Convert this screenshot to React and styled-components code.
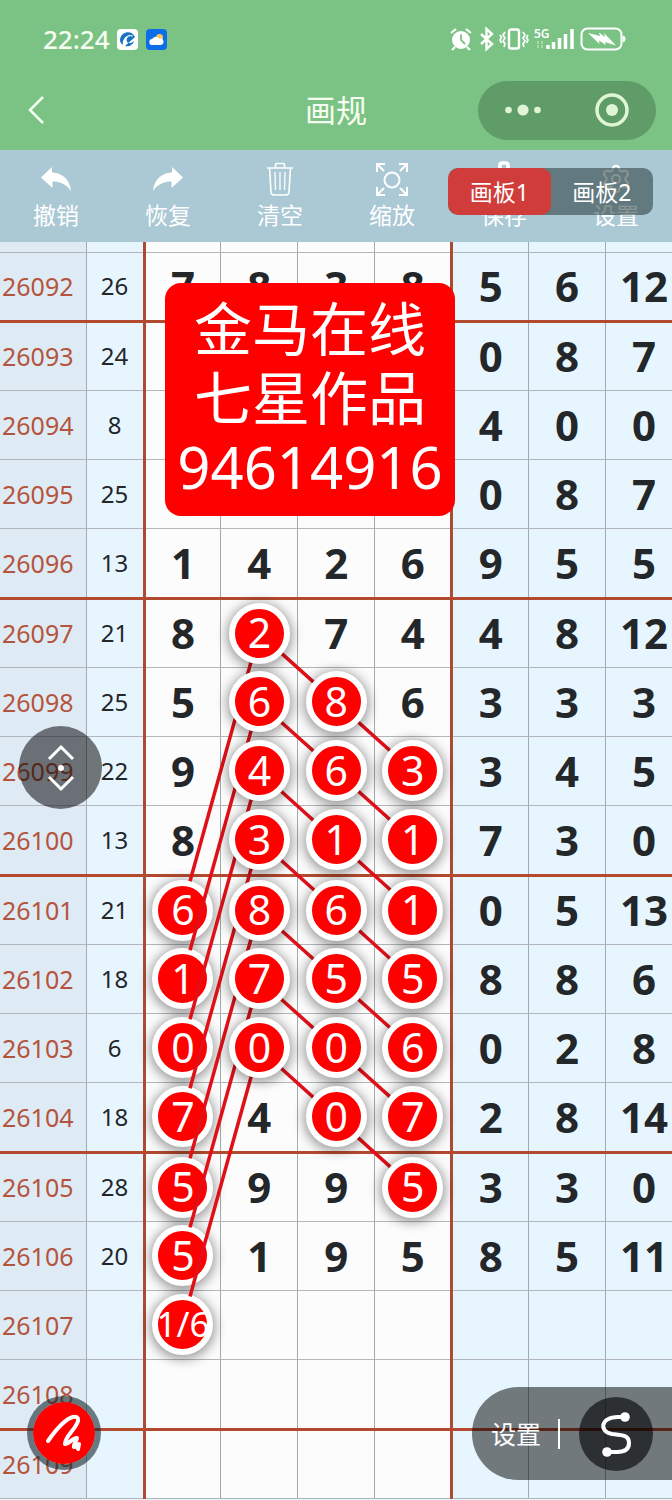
import React from 'react';
import styled, { createGlobalStyle } from 'styled-components';
import { Settings } from 'lucide-react';

const GlobalStyle = createGlobalStyle`
  * {
    box-sizing: border-box;
  }

  body {
    margin: 0;
    background: #e7f6fe;
    font-family: "Noto Sans", "Noto Sans CJK SC", sans-serif;
    overflow-x: hidden;
  }

  button {
    margin: 0;
    padding: 0;
    border: 0;
    background: none;
    color: inherit;
    font: inherit;
    cursor: pointer;
  }
`;

const Page = styled.main`
  position: relative;
  height: 100vh;
  overflow: hidden;
`;

const Header = styled.header`
  background: #7bc384;
  color: #f6fdf0;
`;

const StatusBar = styled.div`
  display: flex;
  align-items: center;
  justify-content: space-between;
  height: 70px;
  padding: 8px 46px 0 43px;

  svg {
    overflow: visible;
  }
`;

const StatusGroup = styled.div`
  display: flex;
  align-items: center;
  gap: ${props => props.$gap}px;
`;

const Clock = styled.time`
  font-size: 26px;
  line-height: 30px;
  font-weight: 500;
`;

const NetworkLabel = styled.span`
  align-self: flex-start;
  width: 16px;
  font-size: 12px;
  line-height: 14px;
  font-weight: 600;
  color: #fff;
`;

const NetworkColumn = styled.div`
  display: flex;
  flex-direction: column;
  width: 16px;
  height: 24px;
  margin: 0 -4px 0 4px;
`;

const NavBar = styled.nav`
  display: grid;
  grid-template-columns: 1fr auto 1fr;
  align-items: center;
  height: 80px;
  padding: 0 16px;
`;

const BackButton = styled.button`
  display: flex;
  justify-self: start;
  padding: 10px;
`;

const Title = styled.h1`
  margin: 0;
  font-size: 31px;
  line-height: 40px;
  font-weight: 400;
`;

const Capsule = styled.div`
  display: grid;
  grid-template-columns: 1fr 1fr;
  justify-self: end;
  width: 178px;
  height: 59px;
  border-radius: 30px;
  background: #5f9c67;
`;

const CapsuleButton = styled.button`
  display: flex;
  align-items: center;
  justify-content: center;
`;

const Toolbar = styled.div`
  position: relative;
  display: grid;
  grid-template-columns: repeat(6, 1fr);
  height: 92px;
  background: #abc8d5;
  color: #fff;
`;

const ToolButton = styled.button`
  display: flex;
  flex-direction: column;
  align-items: center;
  padding-top: 13px;
  font-size: 23px;
  line-height: 32px;

  svg {
    overflow: visible;
    margin-bottom: 4px;
  }
`;

const BoardSwitch = styled.div`
  position: absolute;
  top: 18px;
  right: 19px;
  display: grid;
  grid-template-columns: 1fr 1fr;
  width: 205px;
  height: 47px;
  border-radius: 10px;
  overflow: hidden;
  background: rgba(38, 58, 56, 0.55);
`;

const BoardButton = styled.button`
  border-radius: 10px;
  background: ${props => (props.$active ? '#cf3c3a' : 'transparent')};
  font-size: 23px;
  line-height: 44px;
`;

const Board = styled.section`
  position: relative;
  width: calc(100% + 11px);
`;

const Table = styled.table`
  width: 100%;
  table-layout: fixed;
  border-collapse: collapse;
`;

const Row = styled.tr`
  height: ${props => props.$height}px;

  td, th {
    border-bottom: ${props => (props.$thick ? '3px solid #b34a2f' : '1px solid #b0b6ba')};
  }
`;

const tones = {
  issue: '#deebf4',
  side: '#e7f6fe',
  main: '#fcfcfc',
};

const Cell = styled.td`
  padding: 0;
  border-right: ${props => (props.$edge ? '3px solid #ae4a34' : '1px solid #a4a9ad')};
  background: ${props => tones[props.$tone]};
  color: #24272a;
  font-size: ${props => (props.$small ? 24 : 42)}px;
  font-weight: ${props => (props.$small ? 400 : 700)};
  line-height: 48px;
  text-align: center;
`;

const IssueCell = styled.th`
  padding: 0 0 0 2px;
  border-right: 1px solid #a4a9ad;
  background: ${tones.issue};
  color: #b5543e;
  font-size: 25px;
  font-weight: 400;
  line-height: 48px;
  text-align: left;
`;

const Mark = styled.span`
  position: relative;
  z-index: ${props => (props.$under ? 1 : 3)};
  display: flex;
  align-items: center;
  justify-content: center;
  width: 61px;
  height: 61px;
  margin: 0 auto;
  padding-bottom: 2px;
  border: 6px solid #fff;
  border-radius: 50%;
  background: #fe0000;
  box-shadow: 0 2px 12px 2px rgba(0, 0, 0, 0.4);
  color: #fff;
  font-size: ${props => (props.$long ? 35 : 41)}px;
  font-weight: 400;
`;

const Strokes = styled.svg`
  position: absolute;
  z-index: 2;
  top: 0;
  left: 0;
  width: 100%;
  height: 100%;
  pointer-events: none;
`;

const Note = styled.div`
  position: absolute;
  z-index: 4;
  top: 41px;
  left: 165px;
  width: 290px;
  padding: 11px 0 15px;
  border-radius: 16px;
  background: #fe0000;
  color: #fff;
  font-size: 58px;
  line-height: 69px;
  text-align: center;
  white-space: nowrap;
`;

const ScrollHandle = styled.button`
  position: absolute;
  z-index: 5;
  top: 726px;
  left: 19px;
  width: 83px;
  height: 83px;
  border-radius: 50%;
  background: rgba(0, 0, 0, 0.52);
`;

const PenButton = styled.button`
  position: absolute;
  z-index: 5;
  left: 27px;
  bottom: 30px;
  width: 74px;
  height: 74px;
  border: 6px solid rgba(20, 40, 45, 0.6);
  border-radius: 50%;
  background: #fe0000;
  background-clip: padding-box;

  svg {
    display: block;
    margin: -6px;
  }
`;

const LinePanel = styled.div`
  position: absolute;
  z-index: 5;
  right: 0;
  bottom: 20px;
  display: flex;
  align-items: center;
  width: 200px;
  height: 93px;
  padding-left: 19px;
  border-radius: 47px 0 0 47px;
  background: rgba(0, 0, 0, 0.51);
  color: #fff;
`;

const PanelButton = styled.button`
  font-size: 25px;
  line-height: 32px;
`;

const Divider = styled.span`
  width: 2px;
  height: 30px;
  margin: 0 19px 0 17px;
  background: #fff;
`;

const LineButton = styled.button`
  width: 74px;
  height: 74px;
  flex: none;
  border-radius: 50%;
  background: rgba(0, 0, 0, 0.6);

  svg {
    display: block;
  }
`;

// values in [ ] are marked with a circle on the board
const rows = [
  ['26092', '26', '7', '8', '3', '8', '5', '6', '12'],
  ['26093', '24', '', '', '', '', '0', '8', '7'],
  ['26094', '8', '', '', '', '', '4', '0', '0'],
  ['26095', '25', '', '', '', '', '0', '8', '7'],
  ['26096', '13', '1', '4', '2', '6', '9', '5', '5'],
  ['26097', '21', '8', ['2'], '7', '4', '4', '8', '12'],
  ['26098', '25', '5', ['6'], ['8'], '6', '3', '3', '3'],
  ['26099', '22', '9', ['4'], ['6'], ['3'], '3', '4', '5'],
  ['26100', '13', '8', ['3'], ['1'], ['1'], '7', '3', '0'],
  ['26101', '21', ['6'], ['8'], ['6'], ['1'], '0', '5', '13'],
  ['26102', '18', ['1'], ['7'], ['5'], ['5'], '8', '8', '6'],
  ['26103', '6', ['0'], ['0'], ['0'], ['6'], '0', '2', '8'],
  ['26104', '18', ['7'], '4', ['0'], ['7'], '2', '8', '14'],
  ['26105', '28', ['5'], '9', '9', ['5'], '3', '3', '0'],
  ['26106', '20', ['5'], '1', '9', '5', '8', '5', '11'],
  ['26107', '', ['1/6'], '', '', '', '', '', ''],
  ['26108', '', '', '', '', '', '', '', ''],
  ['26109', '', '', '', '', '', '', '', ''],
];

const BOARD_WIDTH = 683;
const BOARD_HEIGHT = 1256;
const columnX = [182, 259, 336, 413];
const rowY = i => 45 + 69 * i + Math.floor(Math.max(i - 1, 0) / 4);

const isThick = i => i % 4 === 0;
const toneOf = column => (column > 1 && column < 6 ? 'main' : 'side');
const isEdge = column => column === 1 || column === 5;

const UndoIcon = ({ flip }) => (
  <svg width="32" height="32" viewBox="0 0 32 32" fill="currentColor">
    <path
      d="M1 14.500L12 4v5.500C23 10 30 17 31 28C26 21 20 18.500 12.500 18.500V25z"
      transform={flip ? 'matrix(-1 0 0 1 32 0)' : undefined}
    />
  </svg>
);

const TrashIcon = () => (
  <svg width="32" height="32" viewBox="0 0 32 32" fill="none" stroke="currentColor" strokeWidth="1.6">
    <path d="M3 5h26M11.500 5V1.500q0-1 1-1h7q1 0 1 1V5M5.500 5L7 29q0 3 3 3h12q3 0 3-3L26.500 5" />
    <path d="M11 9l.5 18M16 9v18M21 9l-.5 18" strokeWidth="1.300" />
  </svg>
);

const ZoomIcon = () => (
  <svg width="32" height="32" viewBox="0 0 32 32" fill="none" stroke="currentColor" strokeWidth="2">
    <circle cx="16" cy="17" r="7.500" />
    <path d="M1 9V1h8M1 1l7 7M23 1h8v8M31 1l-7 7M31 24v8h-8M31 32l-7-7M9 32H1v-8M1 32l7-7" />
  </svg>
);

const SaveIcon = () => (
  <svg width="32" height="32" viewBox="0 0 32 32" fill="none" stroke="currentColor" strokeWidth="3.500">
    <path d="M12 9V2q0-2 2-2h4q2 0 2 2v7M5 9h22v20H5zM11 19h10" />
  </svg>
);

const GearIcon = () => <Settings size={32} strokeWidth={1.5} />;

const tools = [
  { label: '撤销', icon: <UndoIcon /> },
  { label: '恢复', icon: <UndoIcon flip /> },
  { label: '清空', icon: <TrashIcon /> },
  { label: '缩放', icon: <ZoomIcon /> },
  { label: '保存', icon: <SaveIcon /> },
  { label: '设置', icon: <GearIcon /> },
];

const AppBadges = () => (
  <StatusGroup $gap={8}>
    <svg width="21" height="21" viewBox="0 0 21 21">
      <rect width="21" height="21" rx="4" fill="#fff" />
      <path d="M18 8C16 3 10 2 6 5C2 8 2 14 6 16C5 11 8 7 13 7C10 8 9 10 10 13C12 15 15 14 17 12C16 16 12 18 8 17" fill="#1673c4" />
      <path d="M8 9q3-4 8-2" fill="none" stroke="#fff" />
    </svg>
    <svg width="21" height="21" viewBox="0 0 21 21">
      <rect width="21" height="21" rx="4" fill="#0b6ee8" />
      <circle cx="13.500" cy="8.500" r="3.500" fill="#ffc35a" />
      <path d="M6.500 16a3 3 0 0 1-.3-6a4 4 0 0 1 7-.5a3.300 3.300 0 0 1 1.800 6.500z" fill="#fff" />
    </svg>
  </StatusGroup>
);

const StatusIcons = () => (
  <StatusGroup $gap={0}>
    <svg width="80" height="24" viewBox="0 0 80 24" fill="none" stroke="#fff">
      <circle cx="11" cy="13" r="9" fill="#fff" stroke="none" />
      <path d="M1 6l5-4M21 6l-5-4M5 20l-3 3M17 20l3 3" strokeWidth="2.200" />
      <path d="M11 7.500V13l4 4" stroke="#7bc384" strokeWidth="1.800" />
      <path d="M31 7l11 10l-5.500 5V2L42 7L31 17" strokeWidth="2.400" />
      <rect x="59" y="2.500" width="10" height="19" rx="2" strokeWidth="2.400" />
      <path d="M55 5l-2 3l2 3l-2 3l2 3l-1 3M73 5l2 3l-2 3l2 3l-2 3l1 3M50 8l1.500 2.500L50 13l1.500 3M78 8l-1.500 2.500L78 13l-1.500 3" strokeWidth="1.700" />
    </svg>
    <NetworkColumn>
      <NetworkLabel>5G</NetworkLabel>
      <svg width="10" height="9" viewBox="0 0 10 9" stroke="#b6e8a8" strokeWidth="1.500" strokeDasharray="3 1">
        <path d="M4 0v8M8 0v8" />
      </svg>
    </NetworkColumn>
    <svg width="80" height="24" viewBox="96 0 80 24" fill="none" stroke="#fff">
      <path d="M98 18v4M103.500 15v7M109.500 11v11M115.500 7v15M122 2v20" strokeWidth="3.500" />
      <rect x="131.500" y="1.500" width="40" height="21" rx="6" strokeWidth="2" />
      <path d="M173 9.500q2.500 2.500 0 5" strokeWidth="2.500" />
      <path d="M138 6l12 3l-1-3.500l6 4.500l-1-4l12 12.500l-11-3.500l1 3l-7-4.500l.5 3.500z" fill="#fff" stroke="none" />
    </svg>
  </StatusGroup>
);

const TrendStrokes = () => (
  <Strokes viewBox={`0 0 ${BOARD_WIDTH} ${BOARD_HEIGHT}`} preserveAspectRatio="none">
    <g stroke="#e01018" strokeWidth="3.500">
      {[5, 6, 7, 8, 9, 10, 11].map(i => (
        <g key={i}>
          <line x1={columnX[1]} y1={rowY(i)} x2={columnX[0] + 8} y2={rowY(i + 4) - 29} />
          <line x1={columnX[1]} y1={rowY(i)} x2={columnX[3]} y2={rowY(i + 2)} />
        </g>
      ))}
    </g>
  </Strokes>
);

const DigitCell = ({ value, column }) => {
  const marked = Array.isArray(value);
  return (
    <Cell $tone={toneOf(column)} $edge={isEdge(column)} $small={column === 1}>
      {marked ? (
        <Mark $under={column === 2} $long={value[0].length > 1}>{value[0]}</Mark>
      ) : value}
    </Cell>
  );
};

const TrendTable = () => (
  <Table>
    <colgroup>
      <col style={{ width: 86 }} />
      <col style={{ width: 58 }} />
      <col span="7" />
    </colgroup>
    <tbody>
      <Row $height={10}>
        {[0, 1, 2, 3, 4, 5, 6, 7, 8].map(column => (
          <Cell
            key={column}
            $tone={column === 0 ? 'issue' : toneOf(column)}
            $edge={isEdge(column)}
          />
        ))}
      </Row>
      {rows.map(([issue, ...values], i) => (
        <Row key={issue} $thick={isThick(i)} $height={isThick(i) && i > 0 ? 70 : 69}>
          <IssueCell scope="row">{issue}</IssueCell>
          {values.map((value, index) => (
            <DigitCell key={index} value={value} column={index + 1} />
          ))}
        </Row>
      ))}
    </tbody>
  </Table>
);

const App = () => (
  <Page>
    <GlobalStyle />
    <Header>
      <StatusBar>
        <StatusGroup $gap={7}>
          <Clock>22:24</Clock>
          <AppBadges />
        </StatusGroup>
        <StatusIcons />
      </StatusBar>
      <NavBar>
        <BackButton aria-label="返回">
          <svg width="20" height="28" viewBox="0 0 20 28" fill="none" stroke="currentColor" strokeWidth="2.500">
            <path d="M17 1L4 14l13 13" />
          </svg>
        </BackButton>
        <Title>画规</Title>
        <Capsule>
          <CapsuleButton aria-label="更多">
            <svg width="36" height="12" viewBox="0 0 36 12" fill="#dff5d6">
              <circle cx="3.500" cy="6" r="3.300" />
              <circle cx="18" cy="6" r="5.600" />
              <circle cx="32.500" cy="6" r="3.300" />
            </svg>
          </CapsuleButton>
          <CapsuleButton aria-label="关闭">
            <svg width="34" height="34" viewBox="0 0 34 34">
              <circle cx="17" cy="17" r="15" fill="none" stroke="#dff5d6" strokeWidth="3.500" />
              <circle cx="17" cy="17" r="6" fill="#dff5d6" />
            </svg>
          </CapsuleButton>
        </Capsule>
      </NavBar>
    </Header>
    <Toolbar>
      {tools.map(tool => (
        <ToolButton key={tool.label}>
          {tool.icon}
          {tool.label}
        </ToolButton>
      ))}
      <BoardSwitch>
        <BoardButton $active>画板1</BoardButton>
        <BoardButton>画板2</BoardButton>
      </BoardSwitch>
    </Toolbar>
    <Board>
      <TrendTable />
      <TrendStrokes />
      <Note>
        金马在线<br />
        七星作品<br />
        94614916
      </Note>
    </Board>
    <ScrollHandle aria-label="上下滚动">
      <svg width="83" height="83" viewBox="0 0 83 83" fill="none" stroke="#fff" strokeWidth="3">
        <path d="M30 33l12-12l12 12M30 51l12 12l12-12" />
        <circle cx="42" cy="42" r="3" fill="#fff" stroke="none" />
      </svg>
    </ScrollHandle>
    <PenButton aria-label="画笔">
      <svg width="74" height="74" viewBox="0 0 74 74" fill="none" stroke="#fff" strokeWidth="4" strokeLinecap="round" strokeLinejoin="round">
        <path d="M21 45C28 35 38 23 46 21C53 20 52 25 48 31C44 37 38 42 38 48C41 49 45 42 50 42C50 45 46 48 47 51Q49 51 52 48L51 53" />
      </svg>
    </PenButton>
    <LinePanel>
      <PanelButton>设置</PanelButton>
      <Divider />
      <LineButton aria-label="连线">
        <svg width="74" height="74" viewBox="0 0 74 74" fill="none" stroke="#fff" strokeWidth="4">
          <path d="M46 20h-7C21 20 20 35 33 37C43 38 50 38 50 46C50 53 44 55 38 55H28" />
          <circle cx="46" cy="20" r="4.800" fill="#fff" stroke="none" />
          <circle cx="28" cy="55" r="4.800" fill="#fff" stroke="none" />
        </svg>
      </LineButton>
    </LinePanel>
  </Page>
);

export default App;
